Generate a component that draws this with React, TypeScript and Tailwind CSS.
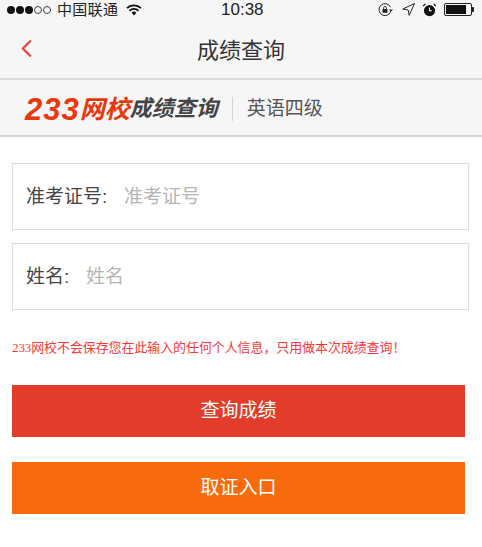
import { ChevronLeft } from "lucide-react";

const cjk = "font-['Liberation_Sans','Noto_Sans_CJK_SC',sans-serif]";

function StatusBar() {
  return (
    <div className="h-[19px] flex items-center justify-between pl-[7px] pr-[8px] text-[#222]">
      <div className="flex items-center w-[160px]">
        <div className="flex items-center gap-[1px]">
          <span className="w-[8px] h-[8px] rounded-full bg-[#111]" />
          <span className="w-[8px] h-[8px] rounded-full bg-[#111]" />
          <span className="w-[8px] h-[8px] rounded-full bg-[#111]" />
          <span className="w-[8px] h-[8px] rounded-full border border-[#444]" />
          <span className="w-[8px] h-[8px] rounded-full border border-[#444]" />
        </div>
        <span className="ml-[6px] text-[15px] leading-none tracking-[0.3px]">中国联通</span>
        <svg className="ml-[8px]" width="16" height="12" viewBox="0 0 16 12">
          <path d="M1 4.2a10 10 0 0 1 14 0" fill="none" stroke="#111" strokeWidth="1.7" />
          <path d="M3.5 6.8a6.4 6.4 0 0 1 9 0" fill="none" stroke="#111" strokeWidth="1.7" />
          <path d="M5.6 8.7a3.4 3.4 0 0 1 4.8 0L8 11.4z" fill="#111" />
        </svg>
      </div>
      <span className="text-[17px] leading-none font-medium absolute left-[221px] top-[1px]">10:38</span>
      <div className="flex items-center">
        <svg width="16" height="14" viewBox="0 0 16 14">
          <path d="M12.5 4.2A6 6 0 1 0 13 7" fill="none" stroke="#222" strokeWidth="1" />
          <path d="M11 6.5h4l-2 2z" fill="#222" />
          <rect x="4.6" y="6" width="4.8" height="3.8" fill="#222" />
          <path d="M5.6 6V4.8a1.4 1.4 0 0 1 2.8 0V6" fill="none" stroke="#222" strokeWidth="0.9" />
        </svg>
        <svg className="ml-[8px]" width="13" height="13" viewBox="0 0 13 13">
          <path d="M12.5.5 .8 6l5.4 1 1 5.4z" fill="none" stroke="#222" strokeWidth="1" strokeLinejoin="round" />
        </svg>
        <svg className="ml-[7px]" width="15" height="14" viewBox="0 0 15 14">
          <circle cx="7.5" cy="7.6" r="5.6" fill="#111" />
          <path d="M7.5 4.4v3.4h2.4" fill="none" stroke="#fff" strokeWidth="1.1" />
          <path d="M1.2 3 3.4.9M13.8 3 11.6.9" stroke="#111" strokeWidth="1.3" />
        </svg>
        <div className="ml-[7px] flex items-center">
          <div className="w-[28px] h-[13px] border border-[#222] rounded-[2px] p-[1px]">
            <div className="w-[20px] h-full bg-[#111]" />
          </div>
          <div className="w-[2px] h-[5px] bg-[#222] rounded-r-[1px]" />
        </div>
      </div>
    </div>
  );
}

function Field({ label, placeholder }: { label: string; placeholder: string }) {
  return (
    <div className="h-[67px] mr-[1px] border border-[#dedede] flex items-center pl-[13px] pt-[1px] text-[19px]">
      <span className="text-[#444]">{label}</span>
      <span className="w-[22px] text-[#444]">:</span>
      <span className="text-[#b5b5b5]">{placeholder}</span>
    </div>
  );
}

export default function App() {
  return (
    <div className={`relative w-[482px] h-[547px] overflow-hidden bg-white ${cjk}`}>
      <div className="bg-[#f6f6f6]">
        <StatusBar />
        <div className="relative h-[61px] flex items-center justify-center pt-[3px] border-b-2 border-[#dcdcdc]">
          <ChevronLeft className="absolute left-[12px] top-[15px] text-[#e5483a]" size={29} strokeWidth={2} />
          <span className="text-[22px] text-[#333]">成绩查询</span>
        </div>
        <div className="h-[57px] flex items-center pl-[25px] pt-[3px] border-b-2 border-[#d6d8d6]">
          <span className="text-[31px] font-bold italic tracking-[1px] text-[#e8380d] leading-none">233</span>
          <span className="text-[25px] font-bold italic text-[#e8380d] leading-none">网校</span>
          <span className="text-[22px] font-bold italic text-[#444] leading-none">成绩查询</span>
          <span className="ml-[14px] w-[1px] h-[24px] bg-[#d4d4d4]" />
          <span className="ml-[14px] text-[19px] text-[#555]">英语四级</span>
        </div>
      </div>

      <div className="px-[12px] pt-[26px] flex flex-col gap-[13px]">
        <Field label="准考证号" placeholder="准考证号" />
        <Field label="姓名" placeholder="姓名" />
      </div>

      <p className="pl-[12px] mt-[28px] font-['Liberation_Serif','Noto_Sans_CJK_SC',serif] text-[13px] tracking-[-0.1px] leading-[19px] text-[#fa3a3a] whitespace-nowrap">
        233网校不会保存您在此输入的任何个人信息，只用做本次成绩查询！
      </p>

      <div className="pl-[12px] pr-[17px] mt-[28px] flex flex-col gap-[25px] text-white text-[19px]">
        <div className="h-[52px] bg-[#e13d2a] flex items-center justify-center">查询成绩</div>
        <div className="h-[52px] bg-[#f76b0d] flex items-center justify-center">取证入口</div>
      </div>
    </div>
  );
}
